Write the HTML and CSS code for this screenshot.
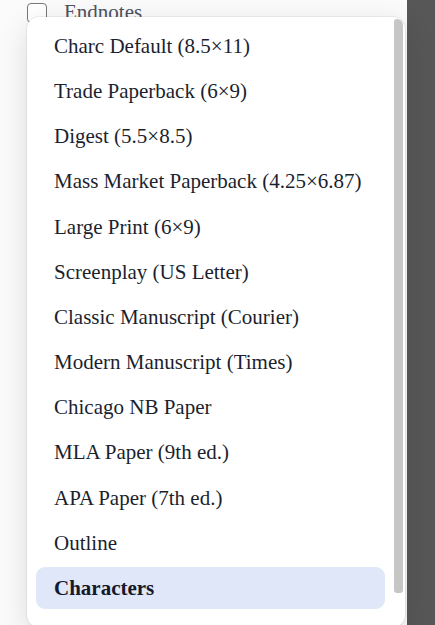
FILE: index.html
```html
<!DOCTYPE html>
<html lang="en">
<head>
<meta charset="utf-8">
<title>Template menu</title>
<link rel="stylesheet" href="styles.css">
</head>
<body>
<div class="app">
  <main class="main">
    <label class="option">
      <span class="checkbox"></span>
      <span class="option-label">Endnotes</span>
    </label>
    <div class="menu" role="listbox">
      <ul class="menu-list">
        <li class="menu-item">Charc Default (8.5×11)</li>
        <li class="menu-item">Trade Paperback (6×9)</li>
        <li class="menu-item">Digest (5.5×8.5)</li>
        <li class="menu-item">Mass Market Paperback (4.25×6.87)</li>
        <li class="menu-item">Large Print (6×9)</li>
        <li class="menu-item">Screenplay (US Letter)</li>
        <li class="menu-item">Classic Manuscript (Courier)</li>
        <li class="menu-item">Modern Manuscript (Times)</li>
        <li class="menu-item">Chicago NB Paper</li>
        <li class="menu-item">MLA Paper (9th ed.)</li>
        <li class="menu-item">APA Paper (7th ed.)</li>
        <li class="menu-item">Outline</li>
        <li class="menu-item is-selected">Characters</li>
      </ul>
      <div class="scroll-track">
        <div class="scroll-thumb"></div>
      </div>
    </div>
  </main>
  <aside class="sidebar"></aside>
</div>
</body>
</html>
```
FILE: styles.css
```css
html, body {
  margin: 0;
  padding: 0;
  height: 100%;
}
body {
  background: #ffffff;
  font-family: "Liberation Serif", "Times New Roman", serif;
  overflow: hidden;
}
.app {
  display: flex;
  height: 625px;
}
.main {
  position: relative;
  flex: 1;
  background: #fbfbfb;
}
.sidebar {
  width: 28px;
  background: #575757;
}
.option {
  display: flex;
  align-items: center;
  gap: 17px;
  padding: 3px 0 0 27px;
  height: 20px;
}
.checkbox {
  box-sizing: border-box;
  width: 20px;
  height: 20px;
  border: 1.5px solid #76787c;
  border-radius: 4px;
  background: #fff;
}
.option-label {
  font-size: 21px;
  color: #4d5261;
  line-height: 20px;
  margin-top: -2px;
}
.menu {
  position: absolute;
  left: 27px;
  top: 17px;
  width: 378px;
  height: 610px;
  display: flex;
  background: #ffffff;
  border-radius: 12px;
  box-shadow: 0 0 0 1px rgba(0, 0, 0, 0.05), 0 8px 30px rgba(0, 0, 0, 0.13);
  overflow: hidden;
}
.menu-list {
  flex: 1;
  list-style: none;
  margin: 0;
  padding: 8px 9px 0 9px;
  display: flex;
  flex-direction: column;
  gap: 3.17px;
}
.menu-item {
  height: 42px;
  line-height: 42px;
  padding: 0 18px;
  border-radius: 9px;
  font-size: 21px;
  color: #1b1f2e;
  white-space: nowrap;
}
.menu-item.is-selected {
  background: #dfe7f8;
  font-weight: 700;
  color: #15192a;
}
.scroll-track {
  width: 9px;
  padding: 2px 2px 0 0;
}
.scroll-thumb {
  height: 574px;
  background: #c6c6c6;
  border-radius: 4px 8px 4px 4px;
}
```
